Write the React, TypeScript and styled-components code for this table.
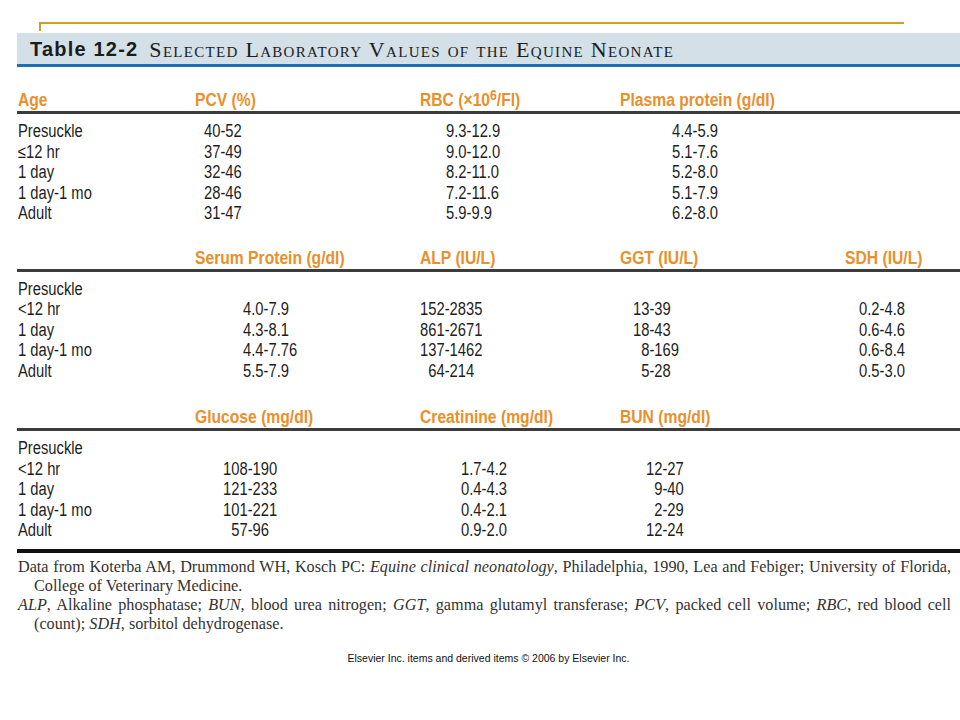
import React from "react";
import styled, { createGlobalStyle } from "styled-components";

const GlobalStyle = createGlobalStyle`
  html, body {
    margin: 0;
    padding: 0;
    background: #ffffff;
  }
  body {
    width: 960px;
    height: 720px;
    overflow: hidden;
  }
`;

const Page = styled.div`
  width: 960px;
  height: 720px;
  box-sizing: border-box;
  padding: 22px 0 0 17px;
  overflow: hidden;
  font-family: "Liberation Sans", Arial, sans-serif;
  color: #1e1e1e;
`;

const GoldRule = styled.div`
  margin-left: 22px;
  width: 865px;
  height: 9px;
  box-sizing: border-box;
  border-top: 2px solid #c9a227;
  border-left: 2px solid #c9a227;
`;

const TitleBand = styled.div`
  margin-top: 2px;
  height: 31px;
  padding-left: 13px;
  display: flex;
  align-items: center;
  gap: 11px;
  background: #d3e0e8;
  border-bottom: 3px solid #1d6fb6;
  color: #1c1c1c;
  white-space: nowrap;
`;

const TableNo = styled.span`
  font-family: "Liberation Sans", Arial, sans-serif;
  font-weight: 700;
  font-size: 20px;
  letter-spacing: 1.2px;
  padding-top: 2px;
`;

const TableTitle = styled.span`
  font-family: "Liberation Serif", "Times New Roman", serif;
  font-variant: small-caps;
  font-size: 22px;
  letter-spacing: 1.3px;
  padding-top: 2px;
`;

const TableSection = styled.section<{ gap: number }>`
  margin-top: ${(p) => p.gap}px;
`;

const grid = `
  display: grid;
  grid-template-columns: 178px 225px 200px 225px 1fr;
`;

const HeadRow = styled.div`
  ${grid}
  height: 20px;
  line-height: 20px;
  padding-bottom: 1px;
  border-bottom: 3px solid #3c3c3c;
  color: #e8902c;
  font-weight: 700;
  font-size: 18px;
`;

const HeadCell = styled.div<{ indent: number }>`
  padding-left: ${(p) => p.indent}px;
  white-space: nowrap;
`;

// the print uses a condensed grotesque; squeeze Liberation Sans to its width
const Narrow = styled.span<{ squeeze: number }>`
  display: inline-block;
  transform: scaleX(${(p) => p.squeeze});
  transform-origin: left center;
`;

const Sup = styled.sup`
  font-size: 14px;
  line-height: 0;
  vertical-align: 6px;
`;

const Body = styled.div<{ last: boolean }>`
  padding-top: 7px;
  padding-bottom: ${(p) => (p.last ? 8 : 0)}px;
  border-bottom: ${(p) => (p.last ? "4px solid #111111" : "none")};
`;

const Row = styled.div`
  ${grid}
  height: 20.5px;
  line-height: 20.5px;
  font-size: 18px;
`;

const Cell = styled.div<{ indent: number }>`
  padding-left: ${(p) => p.indent}px;
  white-space: nowrap;
`;

const Notes = styled.div`
  margin-top: 5px;
  width: 933px;
  padding-left: 1px;
  font-family: "Liberation Serif", "Times New Roman", serif;
  font-size: 16.2px;
  line-height: 19px;
  color: #333333;
`;

const NoteLine = styled.div<{ justify?: boolean; indent?: boolean }>`
  white-space: nowrap;
  padding-left: ${(p) => (p.indent ? 16 : 0)}px;
  text-align: ${(p) => (p.justify ? "justify" : "left")};
  text-align-last: ${(p) => (p.justify ? "justify" : "left")};
`;

const Copyright = styled.div`
  margin-top: 18px;
  width: 943px;
  text-align: center;
  font-family: "Liberation Sans", Arial, sans-serif;
  font-size: 10.5px;
  color: #111111;
`;

interface Section {
  gap: number;
  heads: React.ReactNode[];
  indents: number[];
  rows: string[][];
}

// figure space keeps ranges lined up on the hyphen, as in the printed table
const F = "\u2007";

const sections: Section[] = [
  {
    gap: 23,
    heads: [
      "Age",
      "PCV (%)",
      <>RBC (×10<Sup>6</Sup>/Fl)</>,
      "Plasma protein (g/dl)",
      "",
    ],
    indents: [1, 9, 26, 52, 0],
    rows: [
      ["Presuckle", "40-52", "9.3-12.9", "4.4-5.9", ""],
      ["≤12 hr", "37-49", "9.0-12.0", "5.1-7.6", ""],
      ["1 day", "32-46", "8.2-11.0", "5.2-8.0", ""],
      ["1 day-1 mo", "28-46", "7.2-11.6", "5.1-7.9", ""],
      ["Adult", "31-47", "5.9-9.9", "6.2-8.0", ""],
    ],
  },
  {
    gap: 24,
    heads: ["", "Serum Protein (g/dl)", "ALP (IU/L)", "GGT (IU/L)", "SDH (IU/L)"],
    indents: [1, 48, 0, 13, 14],
    rows: [
      ["Presuckle", "", "", "", ""],
      ["<12 hr", "4.0-7.9", "152-2835", "13-39", "0.2-4.8"],
      ["1 day", "4.3-8.1", "861-2671", "18-43", "0.6-4.6"],
      ["1 day-1 mo", "4.4-7.76", "137-1462", F + "8-169", "0.6-8.4"],
      ["Adult", "5.5-7.9", F + "64-214", F + "5-28", "0.5-3.0"],
    ],
  },
  {
    gap: 26,
    heads: ["", "Glucose (mg/dl)", "Creatinine (mg/dl)", "BUN (mg/dl)", ""],
    indents: [1, 28, 41, 26, 0],
    rows: [
      ["Presuckle", "", "", "", ""],
      ["<12 hr", "108-190", "1.7-4.2", "12-27", ""],
      ["1 day", "121-233", "0.4-4.3", F + "9-40", ""],
      ["1 day-1 mo", "101-221", "0.4-2.1", F + "2-29", ""],
      ["Adult", F + "57-96", "0.9-2.0", "12-24", ""],
    ],
  },
];

function App() {
  return (
    <Page>
      <GlobalStyle />
      <GoldRule />
      <TitleBand>
        <TableNo>Table 12-2</TableNo>
        <TableTitle>Selected Laboratory Values of the Equine Neonate</TableTitle>
      </TitleBand>
      {sections.map((section, s) => (
        <TableSection key={s} gap={section.gap}>
          <HeadRow>
            {section.heads.map((head, i) => (
              <HeadCell key={i} indent={i === 0 ? 1 : 0}>
                <Narrow squeeze={0.87}>{head}</Narrow>
              </HeadCell>
            ))}
          </HeadRow>
          <Body last={s === sections.length - 1}>
            {section.rows.map((row, r) => (
              <Row key={r}>
                {row.map((value, i) => (
                  <Cell key={i} indent={section.indents[i]}>
                    <Narrow squeeze={0.82}>{value}</Narrow>
                  </Cell>
                ))}
              </Row>
            ))}
          </Body>
        </TableSection>
      ))}
      <Notes>
        <NoteLine justify>
          Data from Koterba AM, Drummond WH, Kosch PC: <i>Equine clinical neonatology</i>,
          Philadelphia, 1990, Lea and Febiger; University of Florida,
        </NoteLine>
        <NoteLine indent>College of Veterinary Medicine.</NoteLine>
        <NoteLine justify>
          <i>ALP</i>, Alkaline phosphatase; <i>BUN</i>, blood urea nitrogen; <i>GGT</i>, gamma
          glutamyl transferase; <i>PCV</i>, packed cell volume; <i>RBC</i>, red blood cell
        </NoteLine>
        <NoteLine indent>
          (count); <i>SDH</i>, sorbitol dehydrogenase.
        </NoteLine>
      </Notes>
      <Copyright>Elsevier Inc. items and derived items © 2006 by Elsevier Inc.</Copyright>
    </Page>
  );
}

export default App;
